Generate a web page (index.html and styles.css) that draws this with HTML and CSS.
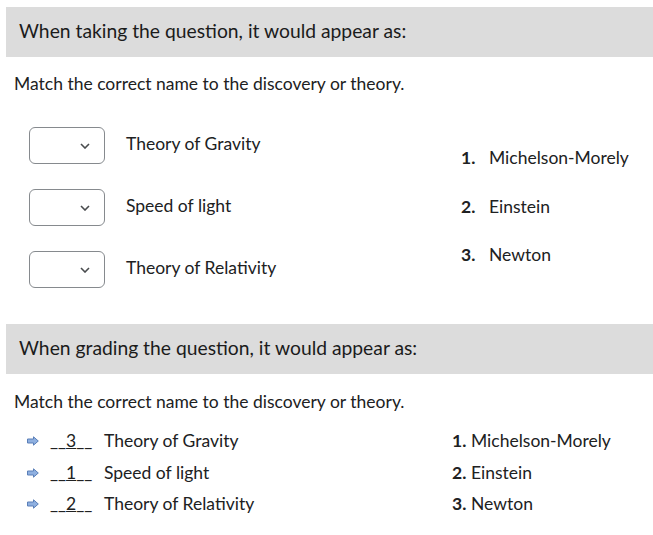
FILE: index.html
```html
<!DOCTYPE html>
<html>
<head>
<meta charset="utf-8">
<link rel="stylesheet" href="styles.css">
</head>
<body>
<div class="page">
  <div class="bar">When taking the question, it would appear as:</div>
  <p class="prompt">Match the correct name to the discovery or theory.</p>
  <div class="take">
    <div class="lefts">
      <div class="row"><span class="sel"><svg width="10" height="6" viewBox="0 0 10 6"><path d="M1 1l4 4 4-4" fill="none" stroke="#494c4e" stroke-width="1.6"/></svg></span><span>Theory of Gravity</span></div>
      <div class="row"><span class="sel"><svg width="10" height="6" viewBox="0 0 10 6"><path d="M1 1l4 4 4-4" fill="none" stroke="#494c4e" stroke-width="1.6"/></svg></span><span>Speed of light</span></div>
      <div class="row"><span class="sel"><svg width="10" height="6" viewBox="0 0 10 6"><path d="M1 1l4 4 4-4" fill="none" stroke="#494c4e" stroke-width="1.6"/></svg></span><span>Theory of Relativity</span></div>
    </div>
    <ol class="rights">
      <li><b>1.</b><span>Michelson-Morely</span></li>
      <li><b>2.</b><span>Einstein</span></li>
      <li><b>3.</b><span>Newton</span></li>
    </ol>
  </div>
  <div class="bar bar2">When grading the question, it would appear as:</div>
  <p class="prompt prompt2">Match the correct name to the discovery or theory.</p>
  <div class="grade">
    <div class="glefts">
      <div class="grow"><svg class="arr" width="12" height="10" viewBox="0 0 12 10"><path d="M0.5 3h6V0.8L11.3 5 6.5 9.2V7h-6z" fill="#8fb0e0" stroke="#5a7fb8" stroke-width="1"/></svg><span class="ans">__<u>3</u>__</span><span>Theory of Gravity</span></div>
      <div class="grow"><svg class="arr" width="12" height="10" viewBox="0 0 12 10"><path d="M0.5 3h6V0.8L11.3 5 6.5 9.2V7h-6z" fill="#8fb0e0" stroke="#5a7fb8" stroke-width="1"/></svg><span class="ans">__<u>1</u>__</span><span>Speed of light</span></div>
      <div class="grow"><svg class="arr" width="12" height="10" viewBox="0 0 12 10"><path d="M0.5 3h6V0.8L11.3 5 6.5 9.2V7h-6z" fill="#8fb0e0" stroke="#5a7fb8" stroke-width="1"/></svg><span class="ans">__<u>2</u>__</span><span>Theory of Relativity</span></div>
    </div>
    <ol class="grights">
      <li><b>1.</b><span>Michelson-Morely</span></li>
      <li><b>2.</b><span>Einstein</span></li>
      <li><b>3.</b><span>Newton</span></li>
    </ol>
  </div>
</div>
</body>
</html>
```
FILE: styles.css
```css
html, body { margin: 0; padding: 0; background: #fff; }
body { font-family: Lato, "Noto Sans", sans-serif; color: #202122; font-size: 17.5px; }
.page { padding: 7px 0 0 6px; }
.bar { box-sizing: border-box; background: #dcdcdc; height: 50px; display: flex; align-items: center; padding-left: 13px; padding-bottom: 3px; font-size: 19.3px; color: #1b1b1b; }
.prompt { margin: 17px 0 0 8px; line-height: 20px; }
.take { display: flex; margin-top: 33px; }
.lefts { width: 455px; display: flex; flex-direction: column; gap: 25px; }
.row { display: flex; align-items: flex-start; height: 37px; }
.row span:last-child { margin-top: 7px; line-height: 20px; }
.sel { box-sizing: border-box; width: 76px; height: 37px; border: 1px solid #868a8e; border-radius: 6px; margin-left: 23px; margin-right: 21px; display: flex; align-items: center; justify-content: flex-end; padding-right: 14px; }
.sel svg { display: block; }
.rights { list-style: none; margin: 21px 0 0; padding: 0; display: flex; flex-direction: column; gap: 28.5px; }
.rights li { display: flex; line-height: 20px; }
.rights b { width: 28px; }
.bar2 { margin-top: 36px; }
.prompt2 { margin-top: 18px; }
.grade { display: flex; margin-top: 19px; }
.glefts { width: 446px; display: flex; flex-direction: column; gap: 11.5px; }
.grow { display: flex; align-items: center; line-height: 20px; }
.arr { margin-left: 21px; margin-right: 11px; }
.ans { width: 54px; }
.grights { list-style: none; margin: 0; padding: 0; display: flex; flex-direction: column; gap: 11.5px; }
.grights li { display: flex; line-height: 20px; }
.grights b { width: 19px; }
```
